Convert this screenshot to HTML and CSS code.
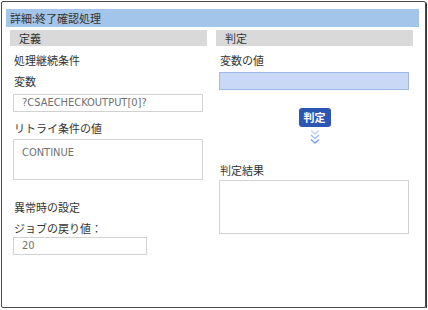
FILE: index.html
```html
<!DOCTYPE html>
<html lang="ja">
  <head>
    <meta charset="UTF-8">
    <meta name="viewport" content="width=device-width, initial-scale=1.0">
    <title>詳細：終了確認処理</title>
    <link rel="stylesheet" href="styles.css">
  </head>
  <body>
    <div class="dialog">
      <div class="dialog-title">詳細:終了確認処理</div>
      <div class="dialog-body">
        <!-- 定義 -->
        <div class="section">
          <div class="section-head">定義</div>
          <div class="label first">処理継続条件</div>
          <div class="label">変数</div>
          <div class="field">?CSAECHECKOUTPUT[0]?</div>
          <div class="label retry">リトライ条件の値</div>
          <div class="field area">CONTINUE</div>
          <div class="label error">異常時の設定</div>
          <div class="label">ジョブの戻り値：</div>
          <div class="field short">20</div>
        </div>
        <!-- 判定 -->
        <div class="section">
          <div class="section-head">判定</div>
          <div class="label first">変数の値</div>
          <div class="field value"></div>
          <div class="judge">
            <button class="judge-btn">判定</button>
            <svg class="arrows" width="12" height="16" viewBox="0 0 12 16">
              <path d="M2 1.5 L6 5 L10 1.5" fill="none" stroke="#c3d4f2" stroke-width="1.4"/>
              <path d="M2 6 L6 9.5 L10 6" fill="none" stroke="#9fbbee" stroke-width="1.4"/>
              <path d="M2 10.5 L6 14 L10 10.5" fill="none" stroke="#7c9fe4" stroke-width="1.4"/>
            </svg>
          </div>
          <div class="label result">判定結果</div>
          <div class="field result-box"></div>
        </div>
      </div>
    </div>
  </body>
</html>
```

FILE: styles.css
```css
/* ダイアログ全体 */
body {
    margin: 0;
    background: #ffffff;
    font-family: "Noto Sans CJK JP", "Noto Sans", sans-serif;
    font-size: 11px;
    color: #333333;
}

.dialog {
    box-sizing: border-box;
    width: 425px;
    height: 307px;
    margin: 1px 0 0 1px;
    padding: 7px 6px 0 4px;
    border: 1px solid #4a4a4a;
    border-radius: 2px;
    box-shadow: 1px 1px 0 #333333;
}

.dialog-title {
    height: 18px;
    line-height: 18px;
    padding-left: 4px;
    background-color: #a3c5ea;
}

.dialog-body {
    display: grid;
    grid-template-columns: 197px 197px;
    column-gap: 9px;
    margin: 3px 0 0 4px;
}

/* セクション */
.section-head {
    height: 16px;
    line-height: 16px;
    padding-left: 9px;
    background-color: #d9d9d9;
}

.label {
    line-height: 16px;
    margin: 5px 0 0 4px;
}

.label.first {
    margin-top: 6px;
}

.label.retry {
    margin-top: 8px;
}

.label.error {
    margin-top: 19px;
}

.label.result {
    margin-top: 17px;
}

/* 入力欄 */
.field {
    box-sizing: border-box;
    width: 190px;
    height: 18px;
    margin: 5px 0 0 3px;
    padding: 0 8px;
    border: 1px solid #d2d2d2;
    background: #ffffff;
    font-family: "Liberation Sans Narrow", "DejaVu Sans Condensed", "DejaVu Sans Mono", monospace;
    font-size: 11px;
    line-height: 16px;
    color: #707070;
}

.field.area {
    height: 41px;
    margin-top: 3px;
    padding-top: 5px;
}

.field.short {
    width: 134px;
    margin-top: 1px;
}

.field.value {
    margin-top: 4px;
    background-color: #c9d9f5;
    border-color: #9fb9ea;
}

.field.result-box {
    height: 54px;
    margin-top: 2px;
}

/* 判定ボタン */
.judge {
    display: flex;
    flex-direction: column;
    align-items: center;
    margin-top: 18px;
}

.judge-btn {
    width: 32px;
    height: 19px;
    padding: 0;
    border: none;
    border-radius: 3px;
    background-color: #2c56b1;
    color: #ffffff;
    font-family: "Noto Sans CJK JP", sans-serif;
    font-size: 11px;
    font-weight: 600;
    line-height: 19px;
    cursor: pointer;
}

.arrows {
    display: block;
    margin-top: 2px;
}
```
